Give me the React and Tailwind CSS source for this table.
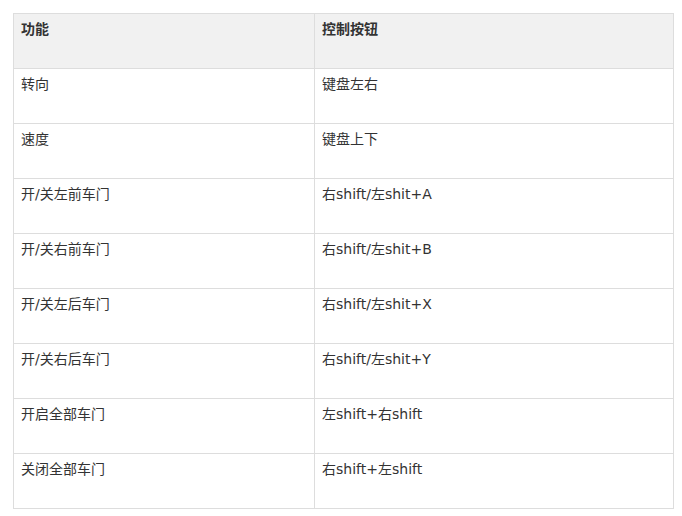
import React from 'react';

const rows = [
  ['转向', '键盘左右'],
  ['速度', '键盘上下'],
  ['开/关左前车门', '右shift/左shit+A'],
  ['开/关右前车门', '右shift/左shit+B'],
  ['开/关左后车门', '右shift/左shit+X'],
  ['开/关右后车门', '右shift/左shit+Y'],
  ['开启全部车门', '左shift+右shift'],
  ['关闭全部车门', '右shift+左shift'],
];

export default function App() {
  return (
    <div className="w-[682px] h-[516px] bg-white pt-[13px] pl-[13px] text-[14px] leading-[20px] text-[#333] font-['DejaVu_Sans','Noto_Sans_CJK_SC',sans-serif]">
      <table className="w-[661px] border-collapse table-fixed">
        <thead>
          <tr className="bg-[#f1f1f1]">
            <th className="w-[301px] h-[55px] border border-[#ddd] px-[7px] pt-[5px] text-left align-top font-bold">功能</th>
            <th className="h-[55px] border border-[#ddd] px-[7px] pt-[5px] text-left align-top font-bold">控制按钮</th>
          </tr>
        </thead>
        <tbody>
          {rows.map(([a, b], i) => (
            <tr key={i}>
              <td className="h-[55px] border border-[#ddd] px-[7px] pt-[5px] align-top">{a}</td>
              <td className="h-[55px] border border-[#ddd] px-[7px] pt-[5px] align-top">{b}</td>
            </tr>
          ))}
        </tbody>
      </table>
    </div>
  );
}
